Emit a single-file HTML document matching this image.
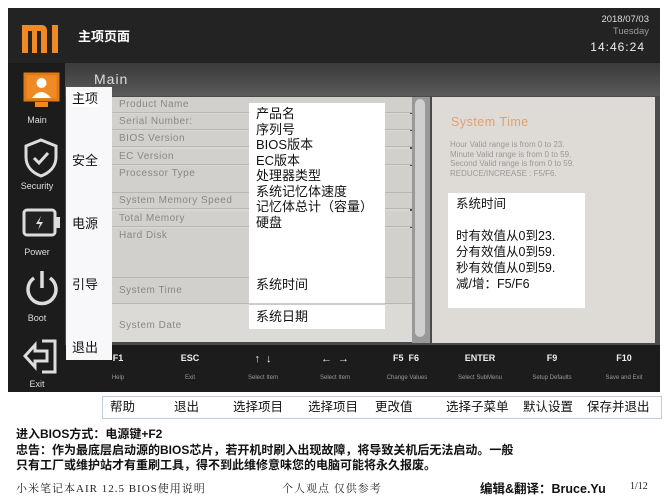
<!DOCTYPE html>
<html><head><meta charset="utf-8"><style>
*{margin:0;padding:0;box-sizing:border-box}
body{width:667px;height:500px;background:#fff;position:relative;overflow:hidden;font-family:"Liberation Sans","Noto Sans CJK SC",sans-serif}
.a{position:absolute}
.row{position:absolute;left:112px;width:300px;height:16px;background:#d2d0cc;color:#888;font-size:10px;line-height:16px;padding-left:7px;letter-spacing:.5px;border-bottom:1px solid #b8b6b2}
.ic{position:absolute;left:8px;width:58px;text-align:center;color:#ddd;font-size:9px}
.fk{position:absolute;top:353px;color:#eee;font-size:9px;font-weight:bold;text-align:center}
.fl{position:absolute;top:375px;color:#999;font-size:6px;text-align:center}
.ov{position:absolute;background:#fff;color:#111;font-size:13px;line-height:16px}
</style></head><body>
<div class="a" style="left:8px;top:8px;width:652px;height:384px;background:#1c1c1c"></div>
<div class="a" style="left:8px;top:8px;width:652px;height:55px;background:#232323"></div>
<svg class="a" style="left:22px;top:25px" width="40" height="28"><path d="M0 0h20a5 5 0 0 1 5 5v23h-6v-22h-4v22h-5v-22h-4v22h-6z M30 0h6v28h-6z" fill="#f08a24"/></svg>
<div class="a" style="left:78px;top:26px;color:#fff;font-size:13px;font-weight:bold">主项页面</div>
<div class="a" style="left:575px;top:14px;color:#ddd;font-size:9.5px;text-align:right;width:74px;line-height:12px">2018/07/03<br><span style="color:#999">Tuesday</span></div>
<div class="a" style="left:575px;top:40px;color:#eee;font-size:12px;width:70px;text-align:right;letter-spacing:1px">14:46:24</div>
<div class="a" style="left:65px;top:63px;width:595px;height:282px;background:#4a4a4a"></div>
<div class="a" style="left:65px;top:63px;width:595px;height:33px;background:linear-gradient(#3a3a3a,#5a5a5a)"></div>
<div class="a" style="left:94px;top:71px;color:#ddd;font-size:14px;letter-spacing:1px">Main</div>
<div class="a" style="left:88px;top:97px;width:322px;height:245px;background:#dad8d4"></div>
<div class="row" style="top:97px">Product Name</div>
<div class="row" style="top:114px">Serial Number:</div>
<div class="row" style="top:131px">BIOS Version</div>
<div class="row" style="top:149px">EC Version</div>
<div class="row" style="top:166px;height:27px">Processor Type</div>
<div class="row" style="top:193px">System Memory Speed</div>
<div class="row" style="top:211px">Total Memory</div>
<div class="row" style="top:228px;height:50px">Hard Disk</div>
<div class="row" style="top:278px;height:26px;line-height:26px">System Time</div>
<div class="row" style="top:304px;height:38px;line-height:44px;background:#dcdad6;border:0">System Date</div>
<div class="a" style="left:412px;top:97px;width:18px;height:246px;background:#999"></div>
<div class="a" style="left:415px;top:99px;width:10px;height:238px;background:#cfcfcf;border-radius:5px"></div>
<div class="a" style="left:432px;top:97px;width:223px;height:246px;background:#dedbd6"></div>
<div class="a" style="left:451px;top:115px;color:#e0a070;font-size:12.5px;letter-spacing:.5px">System Time</div>
<div class="a" style="left:450px;top:140px;color:#999;font-size:8px;line-height:9.5px">Hour Valid range is from 0 to 23.<br>Minute Valid range is from 0 to 59.<br>Second Valid range is from 0 to 59.<br>REDUCE/INCREASE : F5/F6.</div>
<svg class="a" style="left:23px;top:72px" width="38" height="42"><rect x="2" y="2" width="33" height="26" fill="#f08a24" stroke="#e07a14" stroke-width="3"/><circle cx="18.5" cy="11" r="5" fill="#fff"/><path d="M9 26q9-12 19 0z" fill="#fff"/><rect x="12" y="30" width="13" height="5" fill="#f08a24"/></svg>
<div class="ic" style="top:115px">Main</div>
<svg class="a" style="left:23px;top:138px" width="36" height="40"><path d="M18 2l15 6v11c0 10-7 16-15 19C10 35 3 29 3 19V8z" fill="none" stroke="#ddd" stroke-width="3"/><path d="M11 20l5 5 9-10" fill="none" stroke="#ddd" stroke-width="3"/></svg>
<div class="ic" style="top:181px">Security</div>
<svg class="a" style="left:22px;top:208px" width="40" height="30"><rect x="2" y="2" width="31" height="25" rx="3" fill="#222" stroke="#ddd" stroke-width="3"/><rect x="34" y="9" width="4" height="11" fill="#ddd"/><path d="M19 8l-5 8h4l-2 6 5-8h-4z" fill="#ddd"/></svg>
<div class="ic" style="top:247px">Power</div>
<svg class="a" style="left:24px;top:268px" width="36" height="40"><path d="M10 10a14 14 0 1 0 16 0" fill="none" stroke="#ddd" stroke-width="3.5"/><path d="M18 3v17" stroke="#ddd" stroke-width="3.5"/></svg>
<div class="ic" style="top:313px">Boot</div>
<svg class="a" style="left:22px;top:338px" width="38" height="38"><path d="M20 3h13v31h-13" fill="none" stroke="#ddd" stroke-width="3"/><path d="M3 18l10-11v6h12v10h-12v6z" fill="none" stroke="#ddd" stroke-width="3"/></svg>
<div class="ic" style="top:379px">Exit</div>
<div class="fk" style="left:108px;width:20px">F1</div><div class="fl" style="left:106px;width:24px">Help</div>
<div class="fk" style="left:178px;width:24px">ESC</div><div class="fl" style="left:178px;width:24px">Exit</div>
<div class="fk" style="left:238px;width:50px;font-size:11px">↑ &nbsp;↓</div><div class="fl" style="left:232px;width:62px">Select Item</div>
<div class="fk" style="left:310px;width:50px;font-size:11px">← &nbsp;→</div><div class="fl" style="left:304px;width:62px">Select Item</div>
<div class="fk" style="left:380px;width:52px">F5 &nbsp;F6</div><div class="fl" style="left:374px;width:66px">Change Values</div>
<div class="fk" style="left:455px;width:50px">ENTER</div><div class="fl" style="left:444px;width:72px">Select SubMenu</div>
<div class="fk" style="left:540px;width:24px">F9</div><div class="fl" style="left:518px;width:68px">Setup Defaults</div>
<div class="fk" style="left:612px;width:24px">F10</div><div class="fl" style="left:590px;width:68px">Save and Exit</div>
<div class="ov" style="left:66px;top:87px;width:46px;height:273px;background:#f8f8fb"></div>
<div class="ov" style="left:72px;top:91px">主项</div>
<div class="ov" style="left:72px;top:153px;background:none">安全</div>
<div class="ov" style="left:72px;top:216px;background:none">电源</div>
<div class="ov" style="left:72px;top:277px;background:none">引导</div>
<div class="ov" style="left:72px;top:340px;background:none">退出</div>
<div class="ov" style="left:249px;top:103px;width:136px;height:226px;padding:3px 7px;line-height:15.5px">产品名<br>序列号<br>BIOS版本<br>EC版本<br>处理器类型<br>系统记忆体速度<br>记忆体总计（容量）<br>硬盘</div>
<div class="a" style="left:249px;top:303px;width:136px;height:2px;background:#ccc"></div>
<div class="ov" style="left:256px;top:277px;background:none">系统时间</div>
<div class="ov" style="left:256px;top:309px;background:none">系统日期</div>
<div class="ov" style="left:448px;top:193px;width:137px;height:115px;padding:3px 8px;font-size:12.5px">系统时间<br><br>时有效值从0到23.<br>分有效值从0到59.<br>秒有效值从0到59.<br>减/增：F5/F6</div>
<div class="a" style="left:102px;top:396px;width:560px;height:23px;border:1px solid #bcd;font-size:12.5px;color:#111;line-height:21px">
<span class="a" style="left:7px">帮助</span><span class="a" style="left:71px">退出</span><span class="a" style="left:130px">选择项目</span><span class="a" style="left:205px">选择项目</span><span class="a" style="left:272px">更改值</span><span class="a" style="left:343px">选择子菜单</span><span class="a" style="left:420px">默认设置</span><span class="a" style="left:484px">保存并退出</span></div>
<div class="a" style="left:16px;top:427px;font-size:12px;font-weight:bold;color:#111;line-height:15.5px">进入BIOS方式：电源键+F2<br>忠告：作为最底层启动源的BIOS芯片，若开机时刷入出现故障，将导致关机后无法启动。一般<br>只有工厂或维护站才有重刷工具，得不到此维修意味您的电脑可能将永久报废。</div>
<div class="a" style="left:16px;top:480px;font-size:11px;color:#222;font-family:'Liberation Serif','Noto Serif CJK SC',serif;letter-spacing:1px">小米笔记本AIR 12.5 BIOS使用说明</div>
<div class="a" style="left:282px;top:480px;font-size:11px;color:#333;font-family:'Liberation Serif','Noto Serif CJK SC',serif;letter-spacing:1px">个人观点 仅供参考</div>
<div class="a" style="left:480px;top:478px;font-size:12.5px;font-weight:bold;color:#111">编辑&amp;翻译：Bruce.Yu</div>
<div class="a" style="left:630px;top:481px;font-size:10px;color:#222;font-family:'Liberation Serif',serif">1/12</div>
</body></html>
